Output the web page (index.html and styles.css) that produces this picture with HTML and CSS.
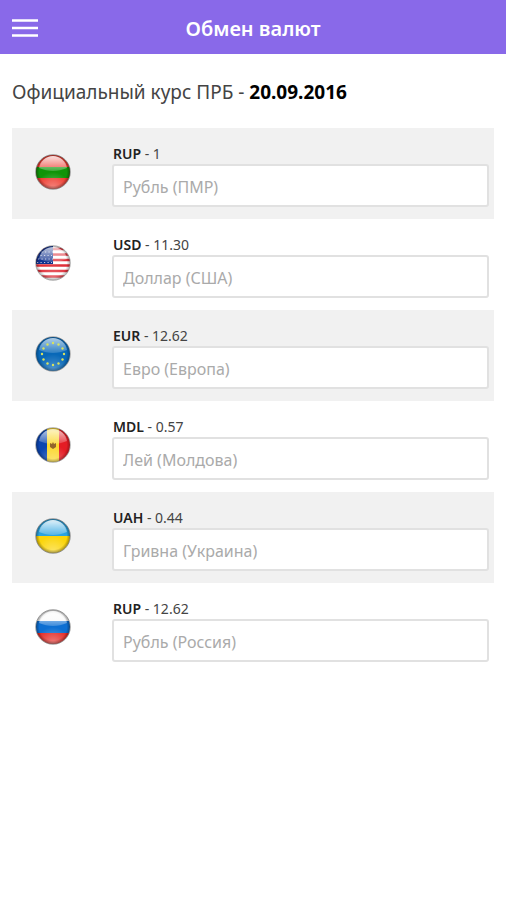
FILE: index.html
```html
<!DOCTYPE html>
<html lang="ru">
<head>
<meta charset="utf-8">
<meta name="viewport" content="width=device-width, initial-scale=1">
<title>Обмен валют</title>
<link rel="stylesheet" href="styles.css">
</head>
<body>
<svg class="defs" aria-hidden="true">
  <defs>
    <clipPath id="ball"><circle cx="18" cy="18" r="17"/></clipPath>
    <linearGradient id="gloss" x1="0" y1="0" x2="0" y2="1">
      <stop offset="0" stop-color="#fff" stop-opacity=".85"/>
      <stop offset="1" stop-color="#fff" stop-opacity=".2"/>
    </linearGradient>
    <radialGradient id="edge">
      <stop offset=".8" stop-color="#000" stop-opacity="0"/>
      <stop offset="1" stop-color="#000" stop-opacity=".35"/>
    </radialGradient>
    <radialGradient id="glow" cx=".5" cy="1" r=".5">
      <stop offset="0" stop-color="#fff" stop-opacity=".4"/>
      <stop offset="1" stop-color="#fff" stop-opacity="0"/>
    </radialGradient>
    <g id="shine">
      <circle cx="18" cy="18" r="17" fill="url(#glow)"/>
      <circle cx="18" cy="18" r="17" fill="url(#edge)"/>
      <path d="M4 14C5 7 11 2 18 2s13 5 14 12c-5 2-9 3-14 3S9 16 4 14z" fill="url(#gloss)"/>
      <circle cx="18" cy="18" r="17.3" fill="none" stroke="#444" stroke-opacity=".5"/>
    </g>
  </defs>
</svg>
<header class="bar">
  <button class="menu" type="button" aria-label="Меню">
    <svg viewBox="0 0 26 20" width="26" height="20"><path d="M0 2.500h26M0 10h26M0 17.500h26" stroke="#fff" stroke-width="2.600"/></svg>
  </button>
  <h1 class="title">Обмен валют</h1>
</header>
<main class="content">
  <p class="rate-date">Официальный курс ПРБ - <b>20.09.2016</b></p>
  <form class="rates">
    <div class="row">
      <svg class="flag" viewBox="0 0 36 36"><g clip-path="url(#ball)"><path fill="#ee3a2e" d="M0 0h36v36H0z"/><path fill="#109408" d="M0 13h36v11H0z"/></g><use href="#shine"/></svg>
      <div class="field"><label for="pmr"><b>RUP</b> - 1</label><input id="pmr" type="text" placeholder="Рубль (ПМР)"></div>
    </div>
    <div class="row">
      <svg class="flag" viewBox="0 0 36 36"><g clip-path="url(#ball)"><path fill="#fff" d="M0 0h36v36H0z"/><path d="M0 4h36M0 9.500h36M0 15h36M0 20.500h36M0 26h36M0 31.500h36" stroke="#e0303a" stroke-width="2.600"/><path fill="#12338f" d="M0 0h18v19H0z"/><path d="M3 7h15M2 10.500h15M3 14h15M2 17.500h15" stroke="#fff" stroke-width="1.200" stroke-dasharray="1.200 2.300" opacity=".7"/></g><use href="#shine" opacity=".85"/></svg>
      <div class="field"><label for="usd"><b>USD</b> - 11.30</label><input id="usd" type="text" placeholder="Доллар (США)"></div>
    </div>
    <div class="row">
      <svg class="flag" viewBox="0 0 36 36"><g clip-path="url(#ball)"><path fill="#0868b8" d="M0 0h36v36H0z"/></g><use href="#shine" opacity=".8"/><g fill="#d9e25f"><circle cx="18" cy="7" r="1.200"/><circle cx="23.500" cy="8.500" r="1.200"/><circle cx="27.500" cy="12.500" r="1.200"/><circle cx="29" cy="18" r="1.200"/><circle cx="27.500" cy="23.500" r="1.200"/><circle cx="23.500" cy="27.500" r="1.200"/><circle cx="18" cy="29" r="1.200"/><circle cx="12.500" cy="27.500" r="1.200"/><circle cx="8.500" cy="23.500" r="1.200"/><circle cx="7" cy="18" r="1.200"/><circle cx="8.500" cy="12.500" r="1.200"/><circle cx="12.500" cy="8.500" r="1.200"/></g></svg>
      <div class="field"><label for="eur"><b>EUR</b> - 12.62</label><input id="eur" type="text" placeholder="Евро (Европа)"></div>
    </div>
    <div class="row">
      <svg class="flag" viewBox="0 0 36 36"><g clip-path="url(#ball)"><path fill="#0b45b0" d="M0 0h13v36H0z"/><path fill="#fbd82e" d="M12 0h12v36H12z"/><path fill="#e41c24" d="M24 0h12v36H24z"/></g><use href="#shine" opacity=".85"/><path d="M15 16l2 1 1-2 1 2 2-1v4l-3 2-3-2z" fill="#92652b"/></svg>
      <div class="field"><label for="mdl"><b>MDL</b> - 0.57</label><input id="mdl" type="text" placeholder="Лей (Молдова)"></div>
    </div>
    <div class="row">
      <svg class="flag" viewBox="0 0 36 36"><g clip-path="url(#ball)"><path fill="#2aa3e0" d="M0 0h36v18H0z"/><path fill="#fbd509" d="M0 18h36v18H0z"/></g><use href="#shine"/></svg>
      <div class="field"><label for="uah"><b>UAH</b> - 0.44</label><input id="uah" type="text" placeholder="Гривна (Украина)"></div>
    </div>
    <div class="row">
      <svg class="flag" viewBox="0 0 36 36"><g clip-path="url(#ball)"><path fill="#f8f8f8" d="M0 0h36v13H0z"/><path fill="#0d6fd2" d="M0 12h36v12H0z"/><path fill="#e42b26" d="M0 24h36v12H0z"/></g><use href="#shine"/></svg>
      <div class="field"><label for="rub"><b>RUP</b> - 12.62</label><input id="rub" type="text" placeholder="Рубль (Россия)"></div>
    </div>
  </form>
</main>
</body>
</html>
```
FILE: styles.css
```css
* { box-sizing: border-box; }

body {
  margin: 0;
  background: #fff;
  color: #444;
  font-family: "Noto Sans", "Open Sans", sans-serif;
}

.defs {
  position: absolute;
  width: 0;
  height: 0;
}

.bar {
  display: grid;
  grid-template-columns: 26px 1fr 26px;
  align-items: center;
  height: 54px;
  padding: 2px 12px 0;
  background: #8969e9;
}

.menu {
  display: flex;
  padding: 0;
  border: 0;
  background: none;
}

.title {
  margin: 0;
  padding-top: 2px;
  color: #fff;
  font-size: 20px;
  line-height: 28px;
  font-weight: 600;
  text-align: center;
}

.content { padding: 24px 12px; }

.rate-date {
  margin: 0 0 22px;
  font-size: 19px;
  line-height: 28px;
}

.rate-date b { color: #000; }

.row {
  display: grid;
  grid-template-columns: 82px 1fr;
  align-items: center;
  gap: 18px;
  height: 91px;
  padding: 0 5px 0 0;
}

.row:nth-child(odd) { background: #f1f1f1; }

.flag {
  width: 36px;
  height: 36px;
  margin: 0 0 4px 23px;
}

.field {
  display: flex;
  flex-direction: column;
  padding-top: 4px;
}

.field label {
  padding-left: 1px;
  font-size: 14px;
  line-height: 20px;
}

.field b {
  color: #222;
  font-weight: 600;
}

.field input {
  width: 100%;
  height: 43px;
  padding: 3px 9px 0;
  border: 2px solid #e1e1e1;
  border-radius: 3px;
  background: #fff;
  color: #444;
  font: inherit;
  font-size: 16px;
}

.field input::placeholder {
  color: #aaa;
  opacity: 1;
}
```
